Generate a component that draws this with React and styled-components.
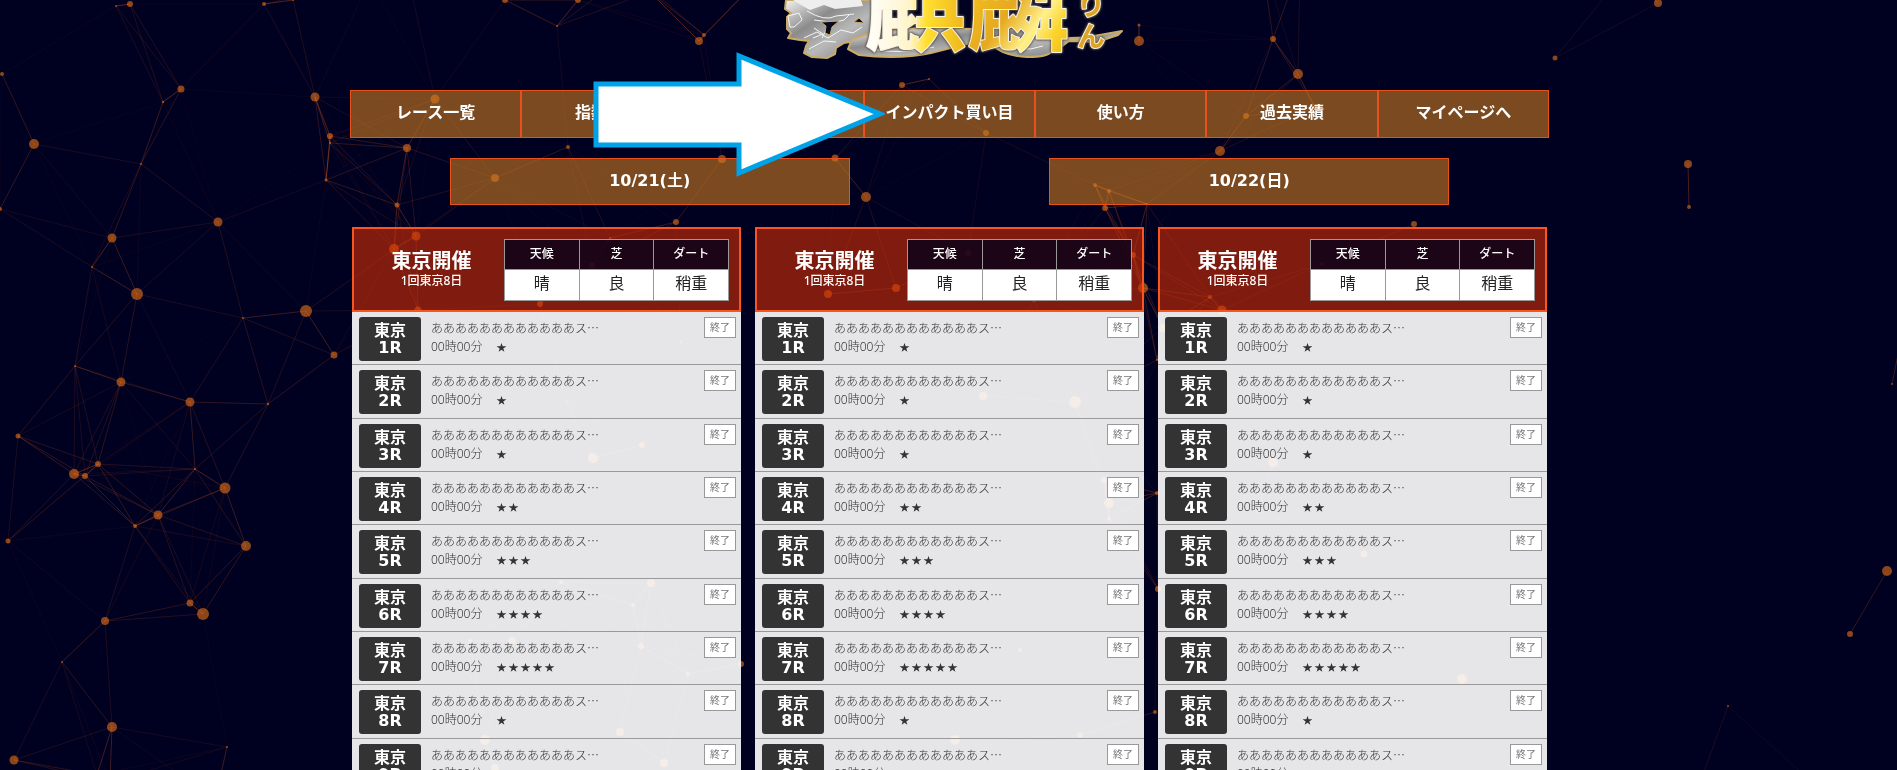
import styled, { createGlobalStyle } from "styled-components";

const GlobalStyle = createGlobalStyle`
    html {
        scrollbar-width: none;
        background-color: #000020;
    }
    body {
        margin: 0;
        color: #333;
        font-family: "Noto Sans", "Noto Sans CJK JP", sans-serif;
        font-size: 12px;
    }
    * {
        box-sizing: border-box;
    }
`;

const boldFont = `"DejaVu Sans", "Noto Sans CJK JP", sans-serif`;

const Page = styled.div`
    position: relative;
    padding-left: 2px;
`;

const Backdrop = styled.svg`
    position: fixed;
    top: 0;
    left: 0;
    width: 100%;
    height: 100%;
    z-index: -1;
`;

const Container = styled.div`
    max-width: 1199px;
    margin: 0 auto;
`;

const Header = styled.header`
    height: 90px;
    display: flex;
    justify-content: center;
    align-items: flex-start;
    padding-left: 8px;
`;

const LogoText = styled.g`
    filter: drop-shadow(0 0 1px #5d5448) drop-shadow(0 0 1px #5d5448);
`;

const NavArea = styled.div`
    position: relative;
`;

const Nav = styled.nav`
    display: grid;
    grid-template-columns: repeat(7, 1fr);
`;

const BarLink = styled.a`
    display: flex;
    align-items: center;
    justify-content: center;
    height: ${(props) => (props.$date ? "47px" : "48px")};
    width: 100%;
    max-width: ${(props) => (props.$date ? "400px" : "none")};
    padding-bottom: 2px;
    border: 1px solid #e9501f;
    background-color: rgba(205, 123, 33, 0.6);
    color: #fff;
    font-family: ${boldFont};
    font-size: 16px;
    font-weight: bold;
    line-height: 24px;
    text-decoration: none;
    white-space: nowrap;
`;

const Arrow = styled.svg`
    position: absolute;
    left: 243px;
    top: -38px;
    pointer-events: none;
`;

const Dates = styled.div`
    display: grid;
    grid-template-columns: 1fr 1fr;
    justify-items: center;
    margin: 20px 0 22px;
`;

const Cards = styled.main`
    display: grid;
    grid-template-columns: repeat(3, 1fr);
    gap: 14px;
    padding: 0 2px;
`;

const Card = styled.section`
    min-width: 0;
`;

const CardHead = styled.div`
    display: flex;
    align-items: center;
    height: 85px;
    padding: 0 10px 0 5px;
    border: 2px solid #f9551f;
    background-color: rgba(213, 47, 5, 0.6);
`;

const Place = styled.div`
    flex: 1;
    color: #fff;
    text-align: center;
`;

const PlaceName = styled.h2`
    margin: 0;
    font-family: ${boldFont};
    font-size: 20px;
    line-height: 22px;
`;

const PlaceDay = styled.p`
    margin: 0;
    font-size: 12px;
    font-weight: 500;
    line-height: 18px;
`;

const Weather = styled.table`
    width: 225px;
    table-layout: fixed;
    border-collapse: collapse;
    text-align: center;
`;

const WeatherHead = styled.th`
    height: 30px;
    padding: 0;
    border: 1px solid #999;
    background-color: rgba(4, 0, 28, 0.8);
    color: #fff;
    font-size: 12px;
    font-weight: 500;
    line-height: 18px;
`;

const WeatherCell = styled.td`
    height: 31px;
    padding: 0 0 3px;
    border: 1px solid #999;
    background-color: #fff;
    color: #222;
    font-size: 16px;
    line-height: 24px;
`;

const RaceList = styled.ul`
    display: grid;
    grid-template-rows: repeat(9, 1fr);
    min-height: 480px;
    margin: 0;
    padding: 0;
    list-style: none;
    background-color: rgba(255, 255, 255, 0.9);
`;

const Race = styled.li`
    display: flex;
    align-items: flex-start;
    padding: 5px 5px 0 7px;
    border-bottom: 1px solid #999;
`;

const RaceLink = styled.a`
    display: flex;
    flex-direction: column;
    justify-content: center;
    width: 62px;
    height: 44px;
    border-radius: 3px;
    background-color: #333;
    color: #fff;
    font-family: ${boldFont};
    font-size: 16px;
    font-weight: bold;
    line-height: 17px;
    text-align: center;
    text-decoration: none;
`;

const RaceInfo = styled.div`
    flex: 1;
    padding: 1px 0 0 10px;
    font-size: 12px;
    line-height: 19px;
`;

const RaceName = styled.div`
    font-family: "Noto Sans CJK JP", sans-serif;
    font-weight: 300;
`;

const RaceTime = styled.div`
    display: flex;
    align-items: center;
    gap: 14px;
    font-weight: 300;
`;

const Stars = styled.span`
    display: flex;
    gap: 2px;
    font-family: "Noto Sans CJK JP", sans-serif;
    font-size: 10px;
    font-weight: 400;
`;

const Status = styled.span`
    width: 32px;
    height: 21px;
    border: 1px solid #999;
    background-color: #fff;
    color: #777;
    font-size: 10px;
    line-height: 18px;
    text-align: center;
`;

const menu = [
    "レース一覧",
    "指数一覧",
    "予想一覧",
    "インパクト買い目",
    "使い方",
    "過去実績",
    "マイページへ",
];

const dates = ["10/21(土)", "10/22(日)"];

// number of stars for each race, 1R first
const races = [1, 1, 1, 2, 3, 4, 5, 1, 2];

// x, y, radius
const nodes = [
    [116, 6, 1], [130, 4, 3], [264, 4, 2], [293, 0, 1], [2, 74, 2], [181, 89, 3.5],
    [163, 102, 1.2], [315, 97, 4.5], [330, 136, 3], [330, 143, 1], [326, 180, 1.5],
    [34, 144, 5], [141, 164, 1], [0, 209, 2], [112, 238, 4.5], [218, 222, 4.5],
    [92, 267, 1], [137, 294, 6], [243, 318, 1], [306, 311, 6], [334, 355, 3.5],
    [75, 366, 1], [121, 382, 4.5], [18, 436, 2.5], [190, 402, 4.5], [268, 404, 1.2],
    [74, 474, 5], [85, 476, 3], [98, 464, 3], [195, 469, 1], [225, 488, 5.5],
    [158, 515, 4.5], [135, 526, 2], [8, 541, 2.5], [246, 546, 5], [190, 603, 3.5],
    [203, 614, 6], [105, 621, 4], [62, 662, 1], [112, 727, 5], [14, 760, 4.5],
    [227, 747, 1], [97, 775, 3], [110, 782, 3], [215, 800, 2],
    [435, 99, 4.5], [407, 148, 4], [397, 205, 2.5], [495, 178, 4], [568, 147, 2],
    [505, 0, 3], [578, 0, 3], [557, 26, 1], [699, 41, 4], [704, 35, 2],
    [370, -20, 1], [410, -15, 1], [750, -12, 2], [650, -8, 1], [630, -28, 1],
    [722, 159, 4], [835, 158, 3.5], [866, 197, 5], [902, 85, 3], [929, 79, 1],
    [676, 222, 3], [416, 236, 4.5], [394, 249, 5], [418, 310, 3.5], [610, 238, 1],
    [540, 304, 3], [592, 265, 3], [828, 294, 4], [896, 288, 4], [968, 253, 3],
    [986, 133, 3], [1034, 300, 2], [1095, 185, 2], [1109, 191, 2], [1105, 208, 3],
    [1147, 204, 1], [1133, 255, 3], [1143, 288, 5], [1220, 151, 5], [1246, 116, 3],
    [1315, 107, 2], [1298, 74, 5], [1273, 39, 3], [1139, 25, 1.5], [1139, 41, 5],
    [1262, -40, 2], [1300, -35, 2], [1414, 224, 3], [1322, 264, 2], [1210, 297, 2],
    [1222, 310, 4.5], [1163, 328, 4], [1157, 360, 1], [983, 396, 4], [1075, 402, 6],
    [1273, 462, 5], [1104, 480, 3], [1109, 503, 5], [1109, 519, 2], [1157, 493, 2],
    [1158, 589, 3], [1364, 554, 3.5], [1155, 712, 2], [1462, 679, 5], [1258, 511, 2],
    [593, 458, 5], [642, 445, 3], [681, 342, 1], [566, 401, 1], [651, 583, 4],
    [561, 582, 2], [633, 605, 2], [512, 641, 4], [470, 641, 2], [641, 646, 3],
    [688, 674, 2], [741, 664, 3], [485, 740, 5], [495, 768, 4], [620, 732, 4],
    [664, 763, 4], [955, 740, 5], [1020, 650, 2], [1080, 735, 3], [860, 600, 2],
    [1555, 58, 2.5], [1658, 3, 4], [1625, -28, 1], [1688, 164, 4], [1689, 207, 2],
    [1887, 571, 5], [1850, 634, 3], [1728, 706, 1], [1690, 810, 1], [1820, 790, 1],
    [1892, 384, 1], [1905, 320, 1],
];

const reach = 150;

const links = [];
nodes.forEach((a, i) => {
    nodes.slice(i + 1).forEach((b) => {
        const distance = Math.hypot(a[0] - b[0], a[1] - b[1]);
        if (distance < reach) {
            links.push([a, b, 0.4 * (1 - distance / reach)]);
        }
    });
});

const Network = () => (
    <Backdrop viewBox="0 0 1897 770" preserveAspectRatio="xMidYMin slice" aria-hidden="true">
        {nodes.map(([x, y, r]) => (
            <circle key={`${x}-${y}`} cx={x} cy={y} r={r} fill="#ff7f18" fillOpacity="0.54" />
        ))}
        {links.map(([a, b, opacity]) => (
            <line
                key={`${a}-${b}`}
                x1={a[0]}
                y1={a[1]}
                x2={b[0]}
                y2={b[1]}
                stroke="#ff6a1c"
                strokeOpacity={opacity}
            />
        ))}
    </Backdrop>
);

const Logo = () => (
    <svg width="350" height="62" viewBox="0 0 350 62" role="img" aria-label="麒麟 きりん">
        <defs>
            <linearGradient id="smoke" x1="0" y1="0" x2="1" y2="1">
                <stop offset="0" stopColor="#f4f4f4" />
                <stop offset="0.35" stopColor="#8b8b8b" />
                <stop offset="0.6" stopColor="#b9b9b9" />
                <stop offset="1" stopColor="#777" />
            </linearGradient>
            <linearGradient id="first" x1="0" y1="0" x2="1" y2="0">
                <stop offset="0" stopColor="#fff" />
                <stop offset="0.45" stopColor="#fff4c8" />
                <stop offset="0.6" stopColor="#ffdf30" />
                <stop offset="1" stopColor="#eeb41c" />
            </linearGradient>
            <linearGradient id="second" x1="0" y1="0" x2="1" y2="1">
                <stop offset="0" stopColor="#ffd21c" />
                <stop offset="0.5" stopColor="#e5a920" />
                <stop offset="0.68" stopColor="#fff08a" />
                <stop offset="0.8" stopColor="#fbd42a" />
                <stop offset="1" stopColor="#e8a912" />
            </linearGradient>
        </defs>
        <g stroke="#c9ab68" strokeWidth="2" fill="url(#smoke)" strokeLinejoin="round">
            <path d="M7 0 L6 9 L12 13 L8 17 L8 29 L12 33 L9 38 L21 40 L30 41 L27 46 L25 53 L33 57 L48 58 L56 54 L57 48 L65 43 L82 40 L96 34 L96 0 Z" />
            <path d="M73 39 L69 49 L80 55 Q120 60 152 53 L195 42 L212 44 Q224 56 248 57 Q270 57 273 51 L282 47 L290 41 L322 42 L323 37 L290 38 L248 30 L140 28 L96 32 Z" />
            <path d="M315 36 L343 31 L339 35 L318 42 Z" />
        </g>
        <path d="M14 0 L82 0 L84 6 L56 9 L45 5 L31 10 L22 5 Z" fill="#eee" />
        <g fill="none" stroke="#f5f5f5" strokeWidth="1">
            <path d="M9 16 L20 13 L23 20 L15 27 L11 27 Z M28 11 Q46 22 57 16 L75 14 M35 20 L51 22 L43 38 M25 38 L38 32 L49 38 L62 30 L74 33 L83 27" />
            <path d="M30 49 L45 41 L57 42 M35 28 L44 34 L34 38 M57 22 L65 20 L70 15 M92 49 Q122 55 155 47 M220 43 Q240 54 264 46" />
        </g>
        <path d="M42 22 L60 21 L53 27 L51 35 L46 33 L47 26 Z M75 22 L80 18 L85 23 Z" fill="#0b0920" stroke="#c9ab68" />
        <LogoText
            fontFamily="'Noto Sans CJK JP', sans-serif"
            fontWeight="700"
            stroke="#f7f3e6"
            strokeWidth="2"
            paintOrder="stroke"
            strokeLinejoin="round"
        >
            <text x="86" y="43" fontSize="102" fill="url(#first)">麒</text>
            <text x="188" y="43" fontSize="102" fill="url(#second)">麟</text>
            <text x="298" y="15" fontSize="28" fill="#e0a425">り</text>
            <text x="298" y="47" fontSize="28" fill="#e0a425">ん</text>
        </LogoText>
    </svg>
);

const Meeting = () => (
    <Card>
        <CardHead>
            <Place>
                <PlaceName>東京開催</PlaceName>
                <PlaceDay>1回東京8日</PlaceDay>
            </Place>
            <Weather>
                <thead>
                    <tr>
                        <WeatherHead scope="col">天候</WeatherHead>
                        <WeatherHead scope="col">芝</WeatherHead>
                        <WeatherHead scope="col">ダート</WeatherHead>
                    </tr>
                </thead>
                <tbody>
                    <tr>
                        <WeatherCell>晴</WeatherCell>
                        <WeatherCell>良</WeatherCell>
                        <WeatherCell>稍重</WeatherCell>
                    </tr>
                </tbody>
            </Weather>
        </CardHead>
        <RaceList>
            {races.map((stars, i) => (
                <Race key={i}>
                    <RaceLink href="#">
                        <span>東京</span>
                        <span>{i + 1}R</span>
                    </RaceLink>
                    <RaceInfo>
                        <RaceName lang="ja">ああああああああああああス…</RaceName>
                        <RaceTime>
                            00時00分
                            <Stars>
                                {Array.from({ length: stars }, (_, n) => (
                                    <span key={n}>★</span>
                                ))}
                            </Stars>
                        </RaceTime>
                    </RaceInfo>
                    <Status>終了</Status>
                </Race>
            ))}
        </RaceList>
    </Card>
);

const App = () => {
    return (
        <Page>
            <GlobalStyle />
            <Network />
            <Container>
                <Header>
                    <Logo />
                </Header>
                <NavArea>
                    <Nav>
                        {menu.map((label) => (
                            <BarLink key={label} href="#">{label}</BarLink>
                        ))}
                    </Nav>
                    <Arrow width="292" height="128" viewBox="0 0 292 128" aria-hidden="true">
                        <path
                            d="M3 32 H146 V4 L287 62 L146 121 V93 H3 Z"
                            fill="#fff"
                            stroke="#00a2e8"
                            strokeWidth="5"
                        />
                    </Arrow>
                </NavArea>
                <Dates>
                    {dates.map((date) => (
                        <BarLink key={date} href="#" $date>{date}</BarLink>
                    ))}
                </Dates>
                <Cards>
                    <Meeting />
                    <Meeting />
                    <Meeting />
                </Cards>
            </Container>
        </Page>
    );
};

export default App;
